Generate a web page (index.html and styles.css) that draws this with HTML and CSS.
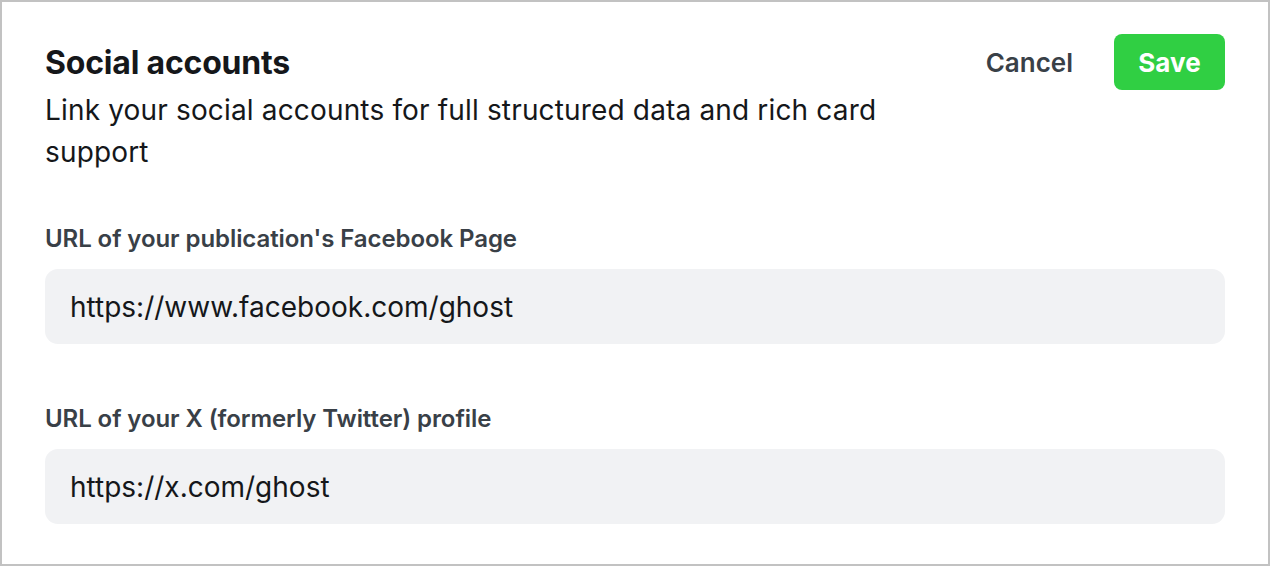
FILE: index.html
```html
<!DOCTYPE html>
<html>
<head>
<meta charset="utf-8">
<link rel="stylesheet" href="styles.css">
</head>
<body>
<div class="frame">
  <div class="header">
    <div class="intro">
      <h1 class="title">Social accounts</h1>
      <p class="desc">Link your social accounts for full structured data and rich card support</p>
    </div>
    <div class="actions">
      <button class="btn-cancel">Cancel</button>
      <button class="btn-save">Save</button>
    </div>
  </div>
  <div class="fields">
    <div class="field">
      <label class="label">URL of your publication's Facebook Page</label>
      <div class="input">https://www.facebook.com/ghost</div>
    </div>
    <div class="field">
      <label class="label">URL of your X (formerly Twitter) profile</label>
      <div class="input">https://x.com/ghost</div>
    </div>
  </div>
</div>
</body>
</html>
```
FILE: styles.css
```css
* { box-sizing: border-box; }
html, body { margin: 0; padding: 0; }
body {
  width: 1270px;
  height: 566px;
  font-family: Inter, "Noto Sans", sans-serif;
  background: #fff;
}
.frame {
  width: 1270px;
  height: 566px;
  border: 2px solid #c2c2c2;
  padding: 43px 43px 0 43px;
  overflow: hidden;
}
.header {
  display: flex;
  justify-content: space-between;
  align-items: flex-start;
}
.intro { max-width: 890px; }
.title {
  margin: 0;
  font-size: 32px;
  font-weight: 700;
  letter-spacing: -0.2px;
  color: #15171a;
  line-height: 36px;
}
.desc {
  margin: 8px 0 0 0;
  font-size: 28px;
  line-height: 42px;
  letter-spacing: 0.16px;
  color: #15171a;
}
.actions {
  display: flex;
  align-items: center;
  margin-top: -11px;
}
.btn-cancel {
  font-family: inherit;
  background: none;
  border: 0;
  font-size: 26px;
  font-weight: 600;
  color: #394047;
  padding: 0 41px 0 0;
  height: 56px;
}
.btn-save {
  font-family: inherit;
  background: #30cf43;
  border: 0;
  border-radius: 8px;
  font-size: 26px;
  font-weight: 700;
  color: #fff;
  width: 111px;
  height: 56px;
  padding: 0;
}
.fields {
  display: flex;
  flex-direction: column;
  gap: 61px;
  margin-top: 52px;
}
.field { display: flex; flex-direction: column; }
.label {
  font-size: 24px;
  font-weight: 600;
  letter-spacing: -0.08px;
  color: #394047;
  line-height: 28px;
  margin-bottom: 16px;
}
.input {
  height: 75px;
  background: #f1f2f4;
  border-radius: 13px;
  padding: 0 25px;
  display: flex;
  align-items: center;
  font-size: 28px;
  color: #15171a;
}
```
